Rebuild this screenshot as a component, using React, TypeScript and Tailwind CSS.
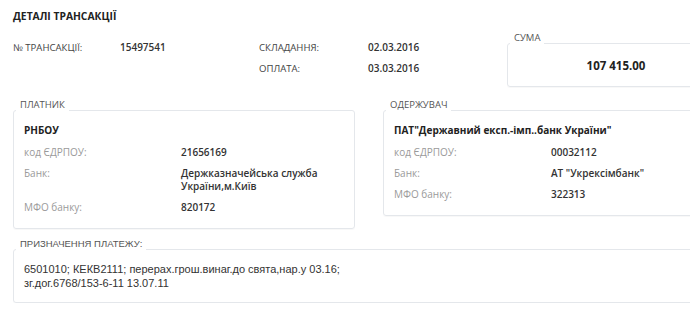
const sans = "font-['Open_Sans',_'Noto_Sans',_sans-serif]";
const arial = "font-['Liberation_Sans',_Arial,_sans-serif]";

const Row = ({ label, value }: { label: string; value: React.ReactNode }) => (
  <div className="mt-[8px] flex leading-[13px]">
    <div className="w-[157px] shrink-0 text-[10px] text-[#9a9a9a]">{label}</div>
    <div className="text-[10px] font-semibold text-[#333]">{value}</div>
  </div>
);

const Box = ({
  title,
  className,
  legendFont,
  children,
}: {
  title: string;
  className?: string;
  legendFont?: string;
  children: React.ReactNode;
}) => (
  <fieldset
    className={`rounded-[3px] border border-[#e4e7eb] shadow-[0_1px_1px_rgba(0,0,0,0.03)] ${className ?? ""}`}
  >
    <legend
      className={`ml-[2px] px-[4px] pb-[10px] text-[9.5px] leading-[12px] text-[#555] ${legendFont ?? sans}`}
    >
      {title}
    </legend>
    {children}
  </fieldset>
);

export default function App() {
  return (
    <div className={`w-full overflow-hidden bg-white ${sans}`}>
      <div className="ml-[13px] w-[712px]">
        {/* header */}
        <div className="flex h-[99px] items-start">
          <div className="w-[494px]">
            <h2 className="h-[37px] pt-[9px] text-[10.3px] font-bold leading-[14px] text-[#222]">
              ДЕТАЛІ ТРАНСАКЦІЇ
            </h2>
            <div className="grid grid-cols-[107px_139px_109px_1fr] text-[9.6px] leading-[21px] text-[#444]">
              <div>№ ТРАНСАКЦІЇ:</div>
              <div className="text-[10px] font-semibold text-[#333]">15497541</div>
              <div>СКЛАДАННЯ:</div>
              <div className="text-[10px] font-semibold text-[#333]">02.03.2016</div>
              <div />
              <div />
              <div>ОПЛАТА:</div>
              <div className="text-[10px] font-semibold text-[#333]">03.03.2016</div>
            </div>
          </div>
          <Box title="СУМА" className="mt-[32px] w-[218px]">
            <div className="pt-[4px] pb-[12px] text-center text-[11.5px] font-bold leading-[16px] text-[#222]">
              107 415.00
            </div>
          </Box>
        </div>

        {/* payer / receiver */}
        <div className="flex items-start gap-[28px]">
          <Box title="ПЛАТНИК" className="w-[342px]">
            <div className="px-[10px] pt-[1px] pb-[14px]">
              <div className="mb-[5px] text-[10px] font-bold leading-[16px] text-[#222]">РНБОУ</div>
              <Row label="код ЄДРПОУ:" value="21656169" />
              <Row
                label="Банк:"
                value={
                  <>
                    Держказначейська служба
                    <br />
                    України,м.Київ
                  </>
                }
              />
              <Row label="МФО банку:" value="820172" />
            </div>
          </Box>
          <Box title="ОДЕРЖУВАЧ" className="w-[342px]">
            <div className="px-[10px] pt-[1px] pb-[14px]">
              <div className="mb-[5px] text-[10px] font-bold leading-[16px] text-[#222]">
                ПАТ"Державний експ.-імп..банк України"
              </div>
              <Row label="код ЄДРПОУ:" value="00032112" />
              <Row label="Банк:" value='АТ "Укрексімбанк"' />
              <Row label="МФО банку:" value="322313" />
            </div>
          </Box>
        </div>

        {/* purpose */}
        <Box title="ПРИЗНАЧЕННЯ ПЛАТЕЖУ:" legendFont={arial} className="mt-[9px] w-[712px]">
          <div className={`px-[10px] pt-[2px] pb-[12px] text-[11px] leading-[14px] text-[#333] ${arial}`}>
            6501010; КЕКВ2111; перерах.грош.винаг.до свята,нар.у 03.16;
            <br />
            зг.дог.6768/153-6-11 13.07.11
          </div>
        </Box>
      </div>
    </div>
  );
}
